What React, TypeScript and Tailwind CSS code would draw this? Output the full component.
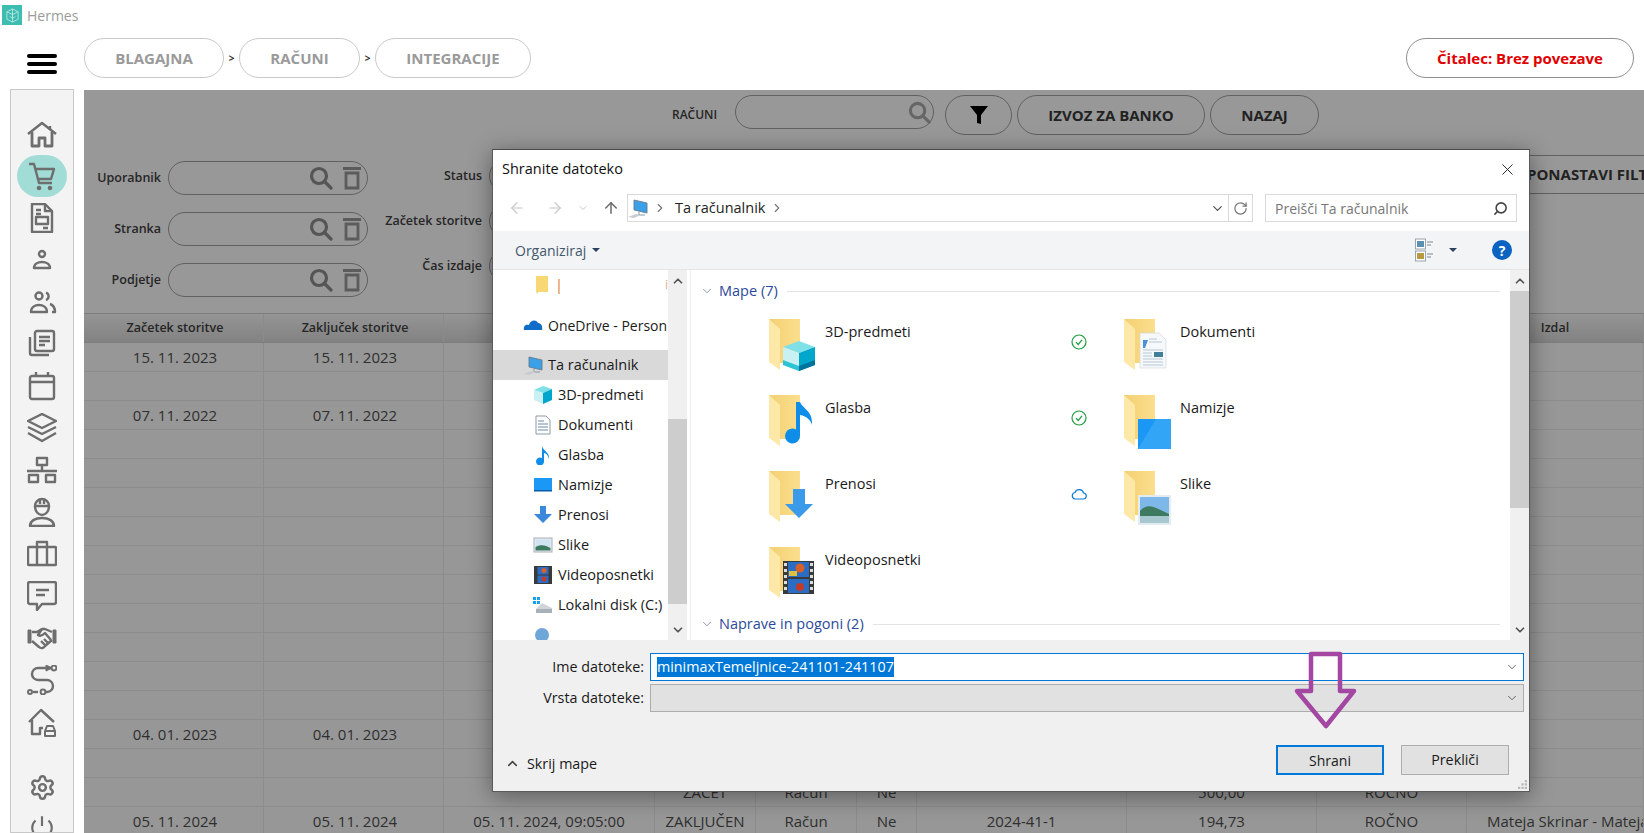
import { Settings, ChevronDown, ChevronUp, ChevronRight, ArrowLeft, ArrowRight, ArrowUp, RotateCw, X, Search } from "lucide-react"

const sans = "font-['Open_Sans',sans-serif]"

function SideIcon({ children }: { children: React.ReactNode }) {
  return (
    <svg viewBox="0 0 30 30" className="h-[30px] w-[30px]" fill="none" stroke="#6e6e6e" strokeWidth="2.4" strokeLinejoin="round">
      {children}
    </svg>
  )
}

const sideIcons = [
  <>
    <path d="M1 15 15 4l14 11" />
    <path d="M23 7v4" />
    <path d="M5 13v14h7v-8h6v8h7V13" strokeWidth="2.800" />
  </>,
  <>
    <path d="M2 3h5l5 19h13" />
    <path d="M8 8h19l-3 10H11" />
    <circle cx="12" cy="27" r="2.300" fill="#6e6e6e" stroke="none" />
    <circle cx="23" cy="27" r="2.300" fill="#6e6e6e" stroke="none" />
  </>,
  <>
    <path d="M5 1h13l7 7v21H5z" />
    <path d="M18 1v7h7M9 7h5M9 11h5M16 25h5" />
    <rect x="9" y="14" width="12" height="7" />
  </>,
  <>
    <circle cx="15" cy="9" r="3" />
    <path d="M7 23c0-4 4-6 8-6s8 2 8 6z" />
  </>,
  <>
    <circle cx="12" cy="9" r="3.500" />
    <path d="M19 5.500a4 4 0 0 1 0 7.500" />
    <path d="M4 25c0-5 4-7 8-7s8 2 8 7z" />
    <path d="M23 17c3 1 5 4 5 8h-3" />
  </>,
  <>
    <rect x="8" y="2" width="19" height="20" rx="2" />
    <path d="M3 8v16a2 2 0 0 0 2 2h17M12 8h11M12 12h11M12 16h6" />
  </>,
  <>
    <rect x="3" y="5" width="24" height="23" rx="2" />
    <path d="M3 11h24M9 1v4M21 1v4" />
  </>,
  <>
    <path d="M15 1 29 8 15 15 1 8z" />
    <path d="M1 14l14 7 14-7" />
    <path d="M1 20l14 8 14-8" />
  </>,
  <>
    <rect x="10" y="3" width="10" height="7" />
    <path d="M15 10v6M0 16h30" />
    <rect x="2" y="20" width="9" height="7" />
    <rect x="19" y="20" width="9" height="7" />
  </>,
  <>
    <path d="M8 9a7 7 0 0 1 14 0z" />
    <path d="M8 9c0 5 3 9 7 9s7-4 7-9M13 2v5M17 2v5" />
    <path d="M3 29c0-5 5-8 12-8s12 3 12 8z" />
  </>,
  <>
    <rect x="1" y="8" width="28" height="18" rx="1" />
    <path d="M10 8V3h10v5M10 8v18M20 8v18" />
  </>,
  <>
    <path d="M3 1h24a2 2 0 0 1 2 2v18a2 2 0 0 1-2 2H15l-5 6v-6H3a2 2 0 0 1-2-2V3a2 2 0 0 1 2-2z" />
    <path d="M9 9h13M9 14h9" />
  </>,
  <>
    <path d="M1 7h3v13H1zM26 7h3v13h-3z" fill="#6e6e6e" strokeWidth="1" />
    <path d="M5 9h5l5-3h3l7 3" />
    <path d="M5 18l7 6c2 2 5 1 6-1l7-6" />
    <path d="M15 6l-4 6c3 2 5 0 7-2l6 7M14 18l4 4M17 16l4 4" />
  </>,
  <>
    <path d="M25 3H11a6 6 0 0 0 0 12h9a6 6 0 0 1 0 12h-1" />
    <path d="M19 0l6 3-6 3z" fill="#6e6e6e" strokeWidth="1" />
    <circle cx="27" cy="3" r="2.400" strokeWidth="2" />
    <circle cx="16" cy="27" r="2.400" strokeWidth="2" />
    <circle cx="3" cy="27" r="2" strokeWidth="2" />
    <path d="M6 27h5" />
  </>,
  <>
    <path d="M2 15 14 3l13 12" />
    <path d="M5 13v14h8v-6h3" />
    <path d="M18 29v-5l2-5h6l2 5v5z" strokeWidth="2" />
    <path d="M18 24h10" strokeWidth="2" />
  </>,
]

function Sidebar() {
  return (
    <div className="-mt-px flex h-[744px] w-[64px] shrink-0 flex-col items-center overflow-hidden border border-[#c8c8c8] bg-[#f3f3f3] pt-[23px]">
      {sideIcons.map((icon, i) => (
        <div key={i} className={`flex h-[42px] shrink-0 items-center justify-center ${i === 1 ? "w-[50px] rounded-[25px] bg-[#a2dcd7]" : "w-full"}`}>
          <SideIcon>{icon}</SideIcon>
        </div>
      ))}
      <div className="mt-[23px] flex h-[42px] shrink-0 items-center justify-center">
        <Settings size={27} color="#6e6e6e" strokeWidth={2.2} />
      </div>
      <div className="mt-[-1px] flex h-[40px] shrink-0 items-center justify-center">
        <svg viewBox="0 0 24 24" className="h-[26px] w-[26px]" fill="none" stroke="#6e6e6e" strokeWidth="2">
          <path d="M12 2v9M6 6a9 9 0 1 0 12 0" />
        </svg>
      </div>
    </div>
  )
}

function Pill({ label, w }: { label: string; w: string }) {
  return (
    <div className={`flex h-[40px] items-center justify-center rounded-[20px] border border-[#c9c9c9] text-[15px] font-bold text-[#9a9a9a] ${w}`}>
      {label}
    </div>
  )
}

function Lens({ size = 24, color = "#555" }: { size?: number; color?: string }) {
  return (
    <svg viewBox="0 0 24 24" width={size} height={size} fill="none" stroke={color} strokeWidth="3.200">
      <circle cx="10" cy="10" r="7.500" />
      <path d="M15.500 15.500 22 22" strokeLinecap="round" />
    </svg>
  )
}

function FilterInput({ label, labelW, w = "w-[200px]", plain }: { label: string; labelW: string; w?: string; plain?: boolean }) {
  return (
    <div className="flex items-center gap-[7px]">
      <span className={`text-right text-[12.500px] font-semibold text-[#262626] ${labelW}`}>{label}</span>
      <div className={`flex h-[34px] items-center justify-end gap-[9px] rounded-[17px] border border-[#616161] pr-[5px] ${w}`}>
        {!plain && (
          <>
            <Lens />
            <svg viewBox="0 0 20 24" className="h-[24px] w-[20px]" fill="none" stroke="#5c5c5c" strokeWidth="2.800">
              <path d="M1 2.500h18M4 7h12v15H4z" />
            </svg>
          </>
        )}
      </div>
    </div>
  )
}

const cols = "grid grid-cols-[180px_180px_211px_101px_101px_60px_210px_190px_150px_177px]"

const rows: string[][] = [
  ["15. 11. 2023", "15. 11. 2023"],
  [],
  ["07. 11. 2022", "07. 11. 2022"],
  [], [], [], [], [], [], [], [], [], [],
  ["04. 01. 2023", "04. 01. 2023"],
  [],
  ["", "", "", "ZAČET", "Račun", "Ne", "", "500,00", "ROČNO", ""],
  ["05. 11. 2024", "05. 11. 2024", "05. 11. 2024, 09:05:00", "ZAKLJUČEN", "Račun", "Ne", "2024-41-1", "194,73", "ROČNO", "Mateja Skrinar - Mateja Skrinar"],
]

function Table() {
  return (
    <div className="text-[#2f2f2f]">
      <div className={`${cols} h-[30px] border-y border-[#7d7d7d] bg-gradient-to-b from-[#959595] to-[#828282] text-[12.500px] font-semibold text-[#262626]`}>
        {Array.from({ length: 10 }).map((_, i) => (
          <div key={i} className={`flex items-center justify-center border-r border-[#8b8b8b] ${i < 2 ? "pl-[3px]" : ""}`}>
            {i === 0 ? "Začetek storitve" : i === 1 ? "Zaključek storitve" : i === 9 ? "Izdal" : ""}
          </div>
        ))}
      </div>
      {rows.map((row, r) => (
        <div key={r} className={`${cols} h-[29px] border-b border-[#8c8c8c] bg-[#979797] text-[15px]`}>
          {Array.from({ length: 10 }).map((_, c) => (
            <div key={c} className={`flex items-center overflow-hidden whitespace-nowrap border-r border-[#8c8c8c] ${c === 9 ? "justify-start pl-[20px]" : c < 2 ? "justify-center pl-[3px]" : "justify-center"}`}>
              {row[c] || ""}
            </div>
          ))}
        </div>
      ))}
    </div>
  )
}

function FolderIcon({ kind }: { kind: string }) {
  return (
    <svg viewBox="0 0 47 54" className="h-[54px] w-[47px] shrink-0">
      <defs>
        <linearGradient id={`back-${kind}`} x1="0" x2="1" y1="0" y2="0">
          <stop offset="0" stopColor="#f3cf72" />
          <stop offset="1" stopColor="#fbdf8e" />
        </linearGradient>
      </defs>
      <path d="M0 0h31v45H3z" fill={`url(#back-${kind})`} />
      <path d="M0 0l11 10v41l-11-8z" fill="#fde8a8" />
      <path d="M11 44h20v1H14l-3 6z" fill="#fff" />
      {kind === "3d" && (
        <>
          <path d="M30 22 46 28 30 34 14 28z" fill="#7fe0e8" />
          <path d="M14 28l16 6v18l-16-6z" fill="#c9f0f2" />
          <path d="M46 28l-16 6v18l16-6z" fill="#00a6cc" />
          <path d="M14 41l16 6v5l-16-6z" fill="#2cc4d4" />
          <path d="M30 47l16-6v5l-16 6z" fill="#00749c" />
        </>
      )}
      {kind === "music" && (
        <path d="M31 7v34a7.500 7.500 0 1 1-4-6.600V7zM31 7c3 7 13 9 12 23-1-4-5-9-12-10z" fill="#0f8ee9" />
      )}
      {kind === "down" && <path d="M24 18h12v15h8L30 47 16 33h8z" fill="#3b9bea" />}
      {kind === "video" && (
        <>
          <rect x="14" y="14" width="31" height="33" fill="#3a3a3a" />
          <rect x="19" y="15" width="21" height="15" fill="#2b6cc4" />
          <rect x="19" y="32" width="21" height="14" fill="#2b6cc4" />
          <circle cx="31" cy="21" r="4.500" fill="#d8602a" />
          <circle cx="31" cy="40" r="4" fill="#c23a2a" />
          <rect x="20" y="24" width="8" height="5" fill="#e0c040" />
          <path d="M15 16h3v3h-3zM15 22h3v3h-3zM15 28h3v3h-3zM15 34h3v3h-3zM15 40h3v3h-3zM41 16h3v3h-3zM41 22h3v3h-3zM41 28h3v3h-3zM41 34h3v3h-3zM41 40h3v3h-3z" fill="#ddd" />
        </>
      )}
      {kind === "docs" && (
        <>
          <path d="M16 14h19l7 7v28H16z" fill="#f6f8fa" stroke="#d4d8dc" strokeWidth=".7" />
          <path d="M19 21h5l-3 8h-2z" fill="#4a8fd8" />
          <path d="M25 20h8M25 23h13M19 31h20M19 40h20M19 43h20M19 46h20M19 34h9M19 37h9" stroke="#b4c8d8" strokeWidth="1" />
          <rect x="30" y="33" width="9" height="5" fill="#3f7f9a" />
        </>
      )}
      {kind === "desk" && (
        <>
          <rect x="14" y="24" width="33" height="30" fill="#1b98f5" />
          <path d="M32 24h15v30H14z" fill="#45aef7" opacity=".6" />
        </>
      )}
      {kind === "pics" && (
        <>
          <rect x="14" y="24" width="33" height="30" fill="#e4ecf2" />
          <rect x="16" y="26" width="29" height="26" fill="#7db8e8" />
          <path d="M16 40c8-9 14-4 29 3v9H16z" fill="#3e7a60" />
          <rect x="16" y="45" width="29" height="7" fill="#a8c8d0" />
        </>
      )}
    </svg>
  )
}

function NavGlyph({ kind }: { kind: string }) {
  return (
    <svg viewBox="0 0 20 20" className="h-[20px] w-[20px] shrink-0">
      {kind === "folder" && <path d="M3 1h12v16H5v2L3 17z" fill="#f8d775" />}
      {kind === "cloud" && <path d="M1 15c-1-4 2-6 5-5 1-5 7-6 9-2 3 0 5 3 4 7z" fill="#0f6cc8" />}
      {kind === "pc" && (
        <>
          <path d="M6 2l13 3v10L6 12z" fill="#3aa0e8" stroke="#6a7a8a" strokeWidth=".9" />
          <path d="M11 14v3h6" stroke="#8a98a6" fill="none" />
          <path d="M0 19l8-3 5 1-7 3z" fill="#c8ccd0" />
        </>
      )}
      {kind === "3d" && (
        <>
          <path d="M10 1l9 3-9 4-9-3z" fill="#7fe0e8" />
          <path d="M1 5l9 3v11l-9-4z" fill="#c9f0f2" />
          <path d="M19 4l-9 4v11l9-4z" fill="#00a6cc" />
        </>
      )}
      {kind === "doc" && (
        <>
          <path d="M3 1h10l4 4v14H3z" fill="#fff" stroke="#8a98a6" />
          <path d="M5 6h6M5 9h10M5 12h10M5 15h10" stroke="#6a8aa6" />
        </>
      )}
      {kind === "music" && <path d="M9 1c1 5 8 6 7 13-1-4-3-6-5-6v8a4 4 0 1 1-2-3z" fill="#0f8ee9" />}
      {kind === "desk" && (
        <>
          <rect x="1" y="3" width="18" height="13" fill="#1b98f5" />
          <rect x="1" y="15" width="18" height="1.500" fill="#0a5ca8" />
        </>
      )}
      {kind === "down" && <path d="M7 1h6v8h6l-9 9-9-9h6z" fill="#3b87dc" />}
      {kind === "pics" && (
        <>
          <rect x="1" y="3" width="18" height="14" fill="#e8ecf0" stroke="#a8b0b8" />
          <rect x="2.500" y="4.500" width="15" height="11" fill="#cfe3f2" />
          <path d="M2.500 12c5-3 10-2 15 1v2.500h-15z" fill="#3e7a60" />
        </>
      )}
      {kind === "video" && (
        <>
          <rect x="1" y="1" width="18" height="18" fill="#3a3a3a" />
          <rect x="4.500" y="2" width="11" height="7.500" fill="#2b6cc4" />
          <rect x="4.500" y="10.500" width="11" height="7.500" fill="#2b6cc4" />
          <circle cx="11" cy="5.500" r="2.500" fill="#d8602a" />
          <circle cx="11" cy="14" r="2.500" fill="#c23a2a" />
        </>
      )}
      {kind === "disk" && (
        <>
          <path d="M0 2h3v3H0zM4 2h3v3H4zM0 6h3v3H0zM4 6h3v3H4z" fill="#12a5ee" />
          <path d="M9 8l10 5v4H3v-3z" fill="#d0d4d8" />
          <rect x="3" y="14" width="16" height="4" fill="#a8b0b8" />
        </>
      )}
      {kind === "net" && <circle cx="9" cy="10" r="7" fill="#6fa8d8" />}
    </svg>
  )
}

const navItems = [
  ["3d", "3D-predmeti"],
  ["doc", "Dokumenti"],
  ["music", "Glasba"],
  ["desk", "Namizje"],
  ["down", "Prenosi"],
  ["pics", "Slike"],
  ["video", "Videoposnetki"],
  ["disk", "Lokalni disk (C:)"],
  ["net", ""],
]

function ScrollTrack({ thumbTop, thumbH }: { thumbTop: string; thumbH: string }) {
  return (
    <div className="flex h-full w-[19px] shrink-0 flex-col items-center bg-[#f0f0f0]">
      <div className="flex h-[21px] shrink-0 items-center justify-center">
        <ChevronUp size={14} color="#555" strokeWidth={3} />
      </div>
      <div className="w-full flex-1">
        <div className={`w-full bg-[#cdcdcd] ${thumbTop} ${thumbH}`} />
      </div>
      <div className="flex h-[21px] shrink-0 items-center justify-center">
        <ChevronDown size={14} color="#555" strokeWidth={3} />
      </div>
    </div>
  )
}

function GroupHeader({ label, className }: { label: string; className: string }) {
  return (
    <div className={`flex h-[20px] items-center pl-[9px] pr-[10px] ${className}`}>
      <ChevronDown size={14} color="#7a8a9a" strokeWidth={1.5} className="mr-[5px] shrink-0" />
      <span className="whitespace-nowrap text-[14.500px] text-[#2b4a9b]">{label}</span>
      <span className="ml-[9px] h-px flex-1 bg-[#e3e3e3]" />
    </div>
  )
}

function FolderItem({ kind, label, status }: { kind: string; label: string; status?: string }) {
  return (
    <div className="flex h-[54px] items-start">
      {status !== undefined && (
        <div className="flex h-full w-[54px] items-start pl-[1px] pt-[15px]">
          {status === "check" && (
            <svg viewBox="0 0 16 16" className="h-[16px] w-[16px]" fill="none" stroke="#1f9b3f" strokeWidth="1.200">
              <circle cx="8" cy="8" r="7" />
              <path d="M5 8.200 7.200 10.500 11 5.800" />
            </svg>
          )}
          {status === "cloud" && (
            <svg viewBox="0 0 16 16" className="h-[16px] w-[16px]" fill="none" stroke="#0f78d4" strokeWidth="1.200">
              <path d="M4 13h8a3 3 0 0 0 .5-6A4.500 4.500 0 0 0 4 6.500 3.300 3.300 0 0 0 4 13z" />
            </svg>
          )}
        </div>
      )}
      <FolderIcon kind={kind} />
      <span className="ml-[9px] mt-[2px] text-[14.500px] text-[#1a1a1a]">{label}</span>
    </div>
  )
}

function SaveDialog() {
  return (
    <div className={`absolute left-[492px] top-[149px] flex h-[643px] w-[1038px] flex-col overflow-hidden border border-t-[#4a4a4a] border-x-[#5a5a5a] border-b-[#5a5a5a] bg-white shadow-[0_4px_22px_rgba(0,0,0,0.4)] ${sans}`}>
      <div className="flex h-[44px] shrink-0 items-center justify-between pb-[6px] pl-[9px] pr-[12px] text-[14.500px] text-[#111]">
        <span>Shranite datoteko</span>
        <X size={19} strokeWidth={1.200} color="#222" />
      </div>

      <div className="flex h-[37px] shrink-0 items-start pl-[15px] pr-[12px]">
        <div className="flex h-[28px] w-[119px] shrink-0 items-center">
          <ArrowLeft size={18} color="#c8c8c8" strokeWidth={1.500} />
          <ArrowRight size={18} color="#c8c8c8" strokeWidth={1.500} className="ml-[20px]" />
          <ChevronDown size={12} color="#c8c8c8" strokeWidth={2} className="ml-[13px]" />
          <ArrowUp size={18} color="#6a6a6a" strokeWidth={2} className="ml-[13px]" />
        </div>
        <div className="flex h-[28px] w-[626px] shrink-0 items-center border border-[#d9d9d9] text-[14.500px] text-[#222]">
          <NavGlyph kind="pc" />
          <ChevronRight size={14} color="#777" className="ml-[5px]" />
          <span className="ml-[8px]">Ta računalnik</span>
          <ChevronRight size={14} color="#777" className="ml-[5px]" />
          <div className="ml-auto flex h-full items-center">
            <ChevronDown size={15} color="#555" />
            <div className="ml-[3px] flex h-full w-[24px] items-center justify-center border-l border-[#d9d9d9]">
              <RotateCw size={15} color="#777" />
            </div>
          </div>
        </div>
        <div className="ml-[12px] flex h-[28px] flex-1 items-center justify-between border border-[#d9d9d9] pl-[9px] pr-[8px] text-[14px] text-[#777]">
          <span>Preišči Ta računalnik</span>
          <Search size={15} color="#444" strokeWidth={2.500} className="-scale-x-100" />
        </div>
      </div>

      <div className="flex h-[39px] shrink-0 items-center border-b border-[#e6e6e6] bg-[#f3f4f6] pl-[22px] pr-[17px]">
        <span className="text-[14px] text-[#44586c]">Organiziraj</span>
        <span className="ml-[6px] h-0 w-0 border-x-[4px] border-t-[4px] border-x-transparent border-t-[#2c4060]" />
        <svg viewBox="0 0 18 24" className="ml-auto h-[24px] w-[18px]">
          <rect x=".5" y="1" width="10" height="10" fill="#fff" stroke="#9aa4ae" />
          <rect x="2" y="3" width="7" height="6" fill="#5a90b0" />
          <rect x=".5" y="13" width="10" height="10" fill="#fff" stroke="#9aa4ae" />
          <rect x="2" y="15" width="7" height="6" fill="#b89a40" />
          <path d="M12 4h6M12 7h4M12 16h6M12 19h4" stroke="#7a8a9a" />
        </svg>
        <span className="ml-[16px] h-0 w-0 border-x-[4px] border-t-[4px] border-x-transparent border-t-[#2c4060]" />
        <div className="ml-[35px] flex h-[20px] w-[20px] items-center justify-center rounded-full bg-[#0a63c0] text-[14px] font-bold text-white">?</div>
      </div>

      <div className="flex h-[370px] shrink-0">
        <div className="h-full w-[175px] shrink-0 overflow-hidden text-[14.500px] text-[#1a1a1a]">
          <div className="flex h-[30px] items-center pl-[40px]">
            <NavGlyph kind="folder" />
            <span className="ml-[2px] text-[#d87a20]">|</span>
            <span className="ml-auto text-[12px] font-light text-[#d87a20]">i</span>
          </div>
          <div className="mt-[10px] flex h-[30px] items-center whitespace-nowrap pl-[30px] text-[14px]">
            <NavGlyph kind="cloud" />
            <span className="ml-[5px]">OneDrive - Person</span>
          </div>
          <div className="mt-[10px] flex h-[30px] items-center bg-[#d9d9d9] pl-[30px]">
            <NavGlyph kind="pc" />
            <span className="ml-[5px]">Ta računalnik</span>
          </div>
          {navItems.map(([kind, label]) => (
            <div key={kind} className="flex h-[30px] items-center whitespace-nowrap pl-[40px]">
              <NavGlyph kind={kind} />
              <span className="ml-[5px]">{label}</span>
            </div>
          ))}
        </div>
        <ScrollTrack thumbTop="mt-[128px]" thumbH="h-[185px]" />
        <div className="w-[4px] shrink-0 border-r border-[#eeeeee]" />
        <div className="min-w-0 flex-1 overflow-hidden">
          <GroupHeader label="Mape (7)" className="mt-[11px]" />
          <div className="mt-[18px] grid grid-cols-[301px_1fr] gap-y-[22px] pl-[78px]">
            <FolderItem kind="3d" label="3D-predmeti" />
            <FolderItem kind="docs" label="Dokumenti" status="check" />
            <FolderItem kind="music" label="Glasba" />
            <FolderItem kind="desk" label="Namizje" status="check" />
            <FolderItem kind="down" label="Prenosi" />
            <FolderItem kind="pics" label="Slike" status="cloud" />
            <FolderItem kind="video" label="Videoposnetki" />
          </div>
          <GroupHeader label="Naprave in pogoni (2)" className="mt-[13px]" />
        </div>
        <ScrollTrack thumbTop="mt-0" thumbH="h-[217px]" />
      </div>

      <div className="flex-1 bg-[#f0f0f0] pt-[13px] text-[14.300px] text-[#1a1a1a]">
        <div className="flex items-center pr-[5px]">
          <span className="w-[151px] shrink-0 text-right">Ime datoteke:</span>
          <div className="ml-[6px] flex h-[28px] flex-1 items-center justify-between border border-[#0078d7] bg-white pl-[6px] pr-[4px]">
            <span className="bg-[#0078d7] leading-[20px] text-white">minimaxTemeljnice-241101-241107</span>
            <ChevronDown size={14} color="#555" strokeWidth={1.500} />
          </div>
        </div>
        <div className="mt-[3px] flex items-center pr-[5px]">
          <span className="w-[151px] shrink-0 text-right">Vrsta datoteke:</span>
          <div className="ml-[6px] flex h-[28px] flex-1 items-center justify-end border border-[#adadad] bg-[#e1e1e1] pr-[4px]">
            <ChevronDown size={14} color="#555" strokeWidth={1.500} />
          </div>
        </div>
        <div className="mt-[33px] flex items-center pl-[12px] pr-[20px]">
          <ChevronUp size={15} color="#444" strokeWidth={2.500} className="mt-[7px]" />
          <span className="ml-[7px] mt-[7px]">Skrij mape</span>
          <div className="ml-auto flex h-[30px] w-[108px] items-center justify-center border-2 border-[#0078d7] bg-[#e1e1e1] text-[14px]">Shrani</div>
          <div className="ml-[17px] flex h-[30px] w-[108px] items-center justify-center border border-[#adadad] bg-[#e1e1e1]">Prekliči</div>
        </div>
      </div>

      <svg viewBox="0 0 9 9" className="absolute bottom-[1px] right-[2px] h-[10px] w-[10px]" fill="#b8b8b8">
        <path d="M7 0h2v2H7zM4 3h2v2H4zM7 3h2v2H7zM1 6h2v2H1zM4 6h2v2H4zM7 6h2v2H7z" />
      </svg>
    </div>
  )
}

export default function App() {
  return (
    <div className={`relative h-[833px] w-[1644px] overflow-hidden bg-white ${sans}`}>
      <div className="flex h-[30px] items-center pl-[2px]">
        <div className="flex h-[20px] w-[20px] items-center justify-center bg-[#3dbdb1]">
          <svg viewBox="0 0 16 16" className="h-[15px] w-[15px]" fill="none" stroke="#cdeeea" strokeWidth=".8">
            <path d="M8 1l6 3v8l-6 3-6-3V4zM8 1v14M2 4l6 3 6-3M5 9l3 2 3-2" />
          </svg>
        </div>
        <span className="ml-[5px] text-[14px] text-[#9b9b9b]">Hermes</span>
      </div>

      <div className="flex h-[60px] items-start pl-[27px] pr-[10px] pt-[8px]">
        <div className="mt-[16px] flex w-[30px] flex-col gap-[4px]">
          <span className="h-[4px] rounded-full bg-black" />
          <span className="h-[4px] rounded-full bg-black" />
          <span className="h-[4px] rounded-full bg-black" />
        </div>
        <div className="ml-[27px] flex items-center">
          <Pill label="BLAGAJNA" w="w-[140px]" />
          <span className="w-[15px] text-center text-[10px] font-bold text-[#333]">&gt;</span>
          <Pill label="RAČUNI" w="w-[121px]" />
          <span className="w-[15px] text-center text-[10px] font-bold text-[#333]">&gt;</span>
          <Pill label="INTEGRACIJE" w="w-[156px]" />
        </div>
        <div className="ml-auto flex h-[40px] w-[228px] items-center justify-center rounded-[20px] border border-[#8f8f8f] text-[15px] font-bold text-[#e00000]">
          Čitalec: Brez povezave
        </div>
      </div>

      <div className="flex h-[743px] pl-[10px]">
        <Sidebar />
        <div className="ml-[10px] min-w-0 flex-1 overflow-hidden bg-[#989898]">
          <div className="flex h-[65px] items-start pl-[588px] pt-[5px]">
            <span className="mt-[11px] w-[63px] text-[12px] font-semibold text-[#262626]">RAČUNI</span>
            <div className="flex h-[34px] w-[199px] items-center justify-end rounded-[17px] border border-[#616161] pr-[2px]">
              <Lens size={23} color="#666" />
            </div>
            <div className="ml-[11px] flex h-[40px] w-[67px] items-center justify-center rounded-[20px] border border-[#616161]">
              <svg viewBox="0 0 20 20" className="h-[20px] w-[20px]" fill="#000">
                <path d="M1 1h18l-7 9v9l-4-1v-8z" />
              </svg>
            </div>
            <div className="ml-[5px] flex h-[40px] w-[188px] items-center justify-center rounded-[20px] border border-[#616161] text-[15px] font-bold text-[#222]">IZVOZ ZA BANKO</div>
            <div className="ml-[5px] flex h-[40px] w-[109px] items-center justify-center rounded-[20px] border border-[#616161] text-[15px] font-bold text-[#222]">NAZAJ</div>
          </div>

          <div className="flex h-[158px] items-start">
            <div className="mt-[6px] flex flex-col gap-[17px]">
              <FilterInput label="Uporabnik" labelW="w-[77px]" />
              <FilterInput label="Stranka" labelW="w-[77px]" />
              <FilterInput label="Podjetje" labelW="w-[77px]" />
            </div>
            <div className="mt-[4px] flex flex-col gap-[11px]">
              <FilterInput label="Status" labelW="w-[114px]" plain />
              <FilterInput label="Začetek storitve" labelW="w-[114px]" plain />
              <FilterInput label="Čas izdaje" labelW="w-[114px]" plain />
            </div>
            <div className="ml-[791px] flex h-[39px] w-[220px] shrink-0 items-center whitespace-nowrap rounded-[20px] border border-[#616161] pl-[46px] text-[15px] font-bold text-[#222]">
              PONASTAVI FILTRE
            </div>
          </div>

          <Table />
        </div>
      </div>

      <SaveDialog />

      <svg className="absolute left-[1293px] top-[650px] h-[82px] w-[66px]" viewBox="0 0 66 82" fill="none" stroke="#a347a3" strokeWidth="4.500" strokeLinejoin="round">
        <path d="M18 4h29v37h14L33 76 4 41h14z" />
      </svg>
    </div>
  )
}
